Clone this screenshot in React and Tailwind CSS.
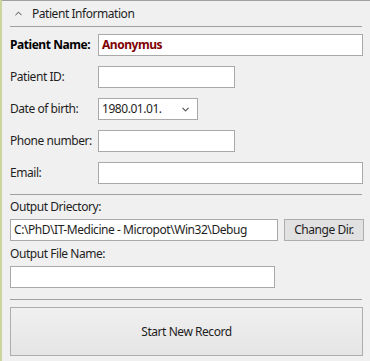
import { ChevronUp, ChevronDown } from 'lucide-react';

const font = { fontFamily: '"Segoe UI", "Noto Sans", "Open Sans", sans-serif' };

function Row({ label, bold, children }) {
  return (
    <div className="flex items-center h-[22px]">
      <span className={`w-[88px] shrink-0 ${bold ? 'font-bold text-black' : 'text-[#1e1e1e]'}`}>{label}</span>
      {children}
    </div>
  );
}

function Input({ className = '', value = '', valueClass = '' }) {
  return (
    <div className={`h-[22px] bg-white border border-[#a9a9a9] px-[3px] flex items-center ${className}`}>
      <span className={valueClass}>{value}</span>
    </div>
  );
}

export default function App() {
  return (
    <div className="w-[370px] h-[361px] bg-[#f0f0f0] border-l-2 border-[#cdd49e] text-[12px] tracking-[-0.45px] text-[#1e1e1e] overflow-hidden" style={font}>
      <div className="border-t border-[#a0a0a0] h-full pl-[8px] pr-[6px]">
        {/* Expander header */}
        <div className="flex items-center h-[25px] pl-[3px]">
          <ChevronUp size={11} strokeWidth={2} className="text-[#333]" />
          <span className="ml-[8px]">Patient Information</span>
        </div>
        <div className="h-px bg-[#a0a0a0] w-[352px]" />

        <div className="flex flex-col gap-[10px] mt-[7px]">
          <Row label="Patient Name:" bold>
            <Input className="w-[265px]" value="Anonymus" valueClass="font-bold text-[#800000]" />
          </Row>
          <Row label="Patient ID:">
            <Input className="w-[137px]" />
          </Row>
          <Row label="Date of birth:">
            <div className="w-[100px] h-[22px] bg-white border border-[#a9a9a9] pl-[3px] pr-[6px] flex items-center justify-between">
              <span>1980.01.01.</span>
              <ChevronDown size={11} strokeWidth={2.5} className="text-[#555]" />
            </div>
          </Row>
          <Row label="Phone number:">
            <Input className="w-[137px]" />
          </Row>
          <Row label="Email:">
            <Input className="w-[265px]" />
          </Row>
        </div>

        <div className="h-px bg-[#a0a0a0] w-[352px] mt-[10px]" />

        <div className="mt-[4px] leading-[16px]">Output Driectory:</div>
        <div className="flex mt-[4px] gap-[6px]">
          <Input className="w-[268px]" value="C:\PhD\IT-Medicine - Micropot\Win32\Debug" />
          <div className="w-[80px] h-[22px] border border-[#adadad] bg-[#e1e1e1] flex items-center justify-center">Change Dir.</div>
        </div>
        <div className="mt-[5px] leading-[16px]">Output File Name:</div>
        <Input className="w-[265px] mt-[4px]" />

        <div className="h-px bg-[#a0a0a0] w-[352px] mt-[11px]" />

        <div className="mt-[7px] w-[353px] h-[49px] border border-[#adadad] bg-gradient-to-b from-[#f0f0f0] to-[#e5e5e5] flex items-center justify-center">
          Start New Record
        </div>
      </div>
    </div>
  );
}
